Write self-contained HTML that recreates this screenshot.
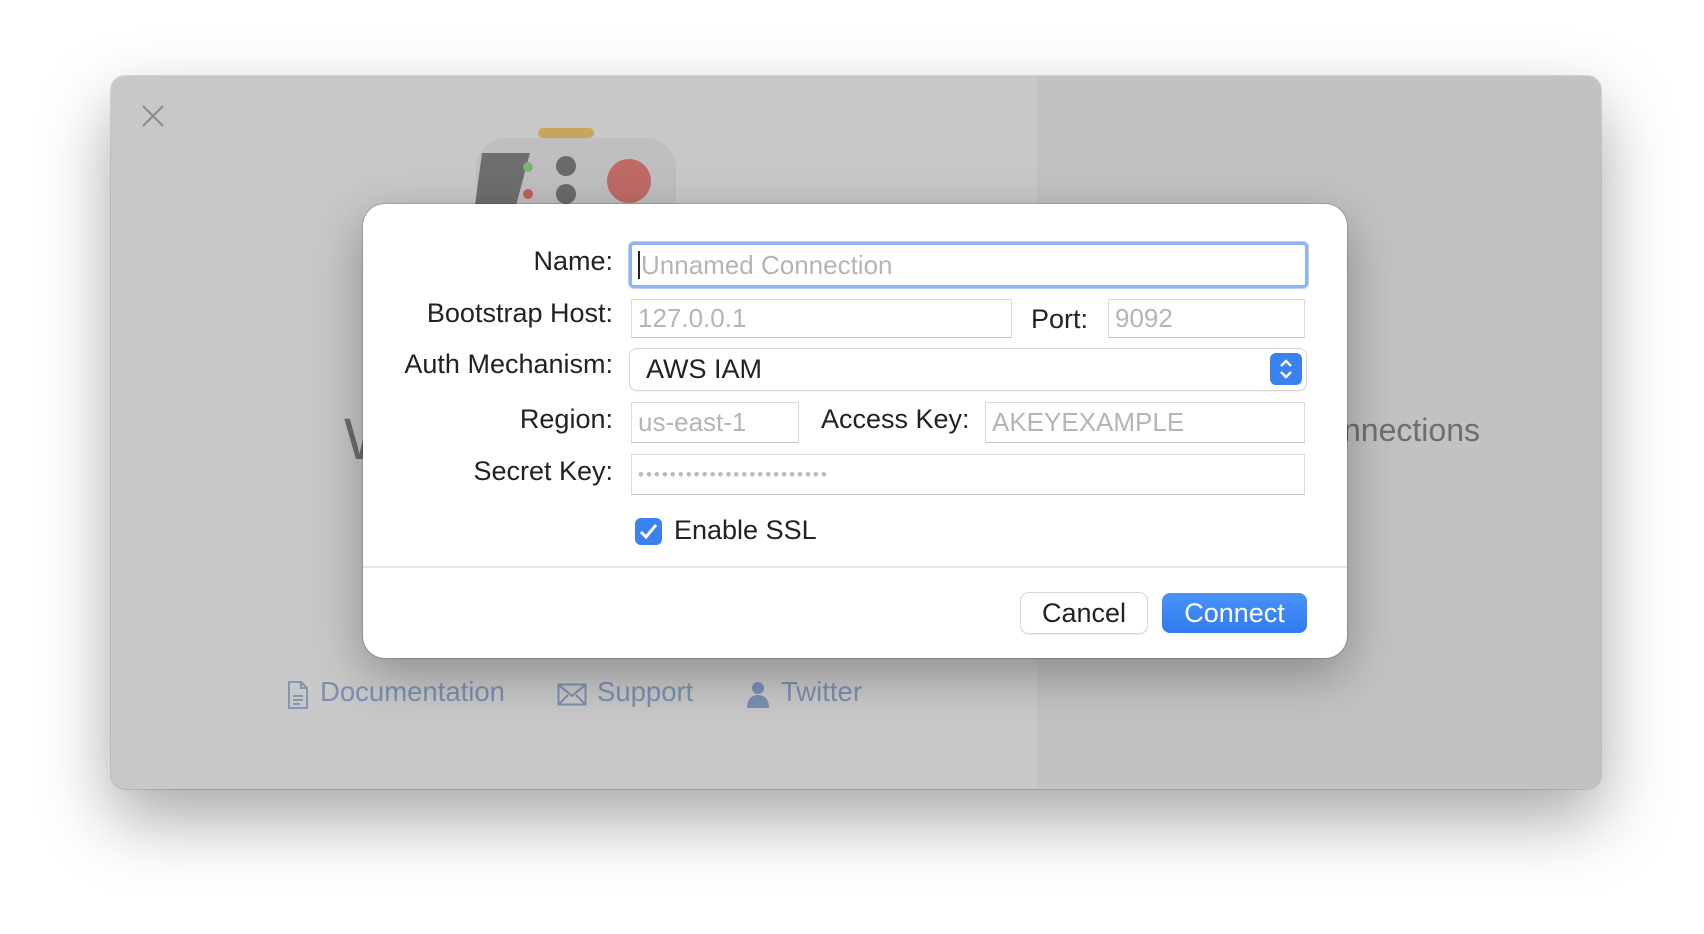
<!DOCTYPE html>
<html><head><style>
*{box-sizing:border-box;margin:0;padding:0}
body{width:1704px;height:934px;background:#fff;position:relative;overflow:hidden;font-family:"Liberation Sans",sans-serif}
.win{position:absolute;left:111px;top:76px;width:1490px;height:713px;border-radius:14px;background:#c8c8c8;box-shadow:0 30px 70px rgba(0,0,0,.35),0 0 0 1px rgba(0,0,0,.12);overflow:hidden}
.right{position:absolute;left:926px;top:0;right:0;bottom:0;background:#c2c2c2}
.abs{position:absolute}
.dlg{position:absolute;left:363px;top:204px;width:984px;height:454px;background:#fff;border-radius:22px;box-shadow:0 16px 50px rgba(0,0,0,.3),0 0 0 1px rgba(0,0,0,.15)}
.lbl{position:absolute;font-size:27px;color:#222;text-align:right;white-space:nowrap}
.fld{position:absolute;background:#fff;border:1px solid #dadada;border-bottom-color:#c4c4c4;font-size:26px;color:#b5b5b5;padding-left:6px;display:flex;align-items:center;white-space:nowrap}
.btn{position:absolute;border-radius:8px;font-size:27px;display:flex;align-items:center;justify-content:center}
.link{position:absolute;top:676px;font-size:27.5px;color:#7a90b3}
</style></head><body>
<div class="win">
 <div class="right"></div>
 <svg class="abs" style="left:30px;top:28px" width="24" height="24"><path d="M2 2L22 22M22 2L2 22" stroke="#8a8a8a" stroke-width="2"/></svg>
 <svg class="abs" style="left:355px;top:50px" width="220" height="90">
  <rect x="72" y="2" width="56" height="10" rx="5" fill="#c9a45e"/>
  <rect x="10" y="12" width="200" height="90" rx="30" fill="#bfbfc2"/>
  <path d="M16 27h48l-16 60H8z" fill="#6e6e70"/>
  <circle cx="62" cy="41" r="5" fill="#7fb07a"/><circle cx="62" cy="68" r="5" fill="#c0605a"/>
  <circle cx="100" cy="40" r="10" fill="#6a6a6a"/><circle cx="100" cy="68" r="10" fill="#6a6a6a"/>
  <circle cx="163" cy="55" r="22" fill="#c06a66"/>
 </svg>
 <div class="abs" style="left:233px;top:330px;font-size:58px;color:#6e6e6e">W</div>
 <div class="abs" style="left:1232px;top:336px;font-size:32px;color:#6e6e6e">nnections</div>
</div>
<svg class="abs" style="left:286px;top:680px" width="24" height="30"><path d="M3 2h12l6 6v20H3z M15 2v6h6 M7 16h10M7 20h10M7 24h7" fill="none" stroke="#7a90b3" stroke-width="1.8"/></svg>
<div class="link" style="left:320px">Documentation</div>
<svg class="abs" style="left:557px;top:683px" width="30" height="24"><rect x="1.5" y="1.5" width="27" height="20" fill="none" stroke="#7a90b3" stroke-width="2"/><path d="M2 2l13 11L28 2M2 21l9-9M28 21l-9-9" fill="none" stroke="#7a90b3" stroke-width="2"/></svg>
<div class="link" style="left:597px">Support</div>
<svg class="abs" style="left:746px;top:681px" width="24" height="28"><circle cx="12" cy="7" r="6" fill="#7a90b3"/><path d="M1 27c0-9 5-13 11-13s11 4 11 13z" fill="#7a90b3"/></svg>
<div class="link" style="left:781px">Twitter</div>

<div class="dlg">
 <div class="lbl" style="right:734px;top:42px">Name:</div>
 <div class="fld" style="left:266px;top:38px;width:679px;height:46px;border:3px solid #8fb3f5;border-radius:5px;box-shadow:0 0 0 1px #b9cff7"><span style="display:inline-block;width:2px;height:28px;background:#222;margin-right:1px"></span>Unnamed Connection</div>
 <div class="lbl" style="right:734px;top:94px">Bootstrap Host:</div>
 <div class="fld" style="left:268px;top:95px;width:381px;height:39px">127.0.0.1</div>
 <div class="lbl" style="left:668px;top:100px">Port:</div>
 <div class="fld" style="left:745px;top:95px;width:197px;height:39px">9092</div>
 <div class="lbl" style="right:734px;top:145px">Auth Mechanism:</div>
 <div class="abs" style="left:267px;top:145px;width:676px;height:41px;border-radius:7px;box-shadow:0 0 0 1px #d5d5d5,0 1px 2px rgba(0,0,0,.15);font-size:27px;color:#222;padding:5px 0 0 16px">AWS IAM
  <div class="abs" style="right:4px;top:4px;width:32px;height:32px;border-radius:6px;background:#3b82f1"><svg width="32" height="32"><path d="M11 13l5-5 5 5M11 19l5 5 5-5" fill="none" stroke="#fff" stroke-width="2.4"/></svg></div></div>
 <div class="lbl" style="right:734px;top:200px">Region:</div>
 <div class="fld" style="left:268px;top:198px;width:168px;height:41px">us-east-1</div>
 <div class="lbl" style="left:458px;top:200px">Access Key:</div>
 <div class="fld" style="left:622px;top:198px;width:320px;height:41px">AKEYEXAMPLE</div>
 <div class="lbl" style="right:734px;top:252px">Secret Key:</div>
 <div class="fld" style="left:268px;top:250px;width:674px;height:41px;font-size:17px;letter-spacing:2px;color:#bbb">••••••••••••••••••••••••</div>
 <div class="abs" style="left:272px;top:314px;width:27px;height:27px;border-radius:6px;background:#3b82f1"><svg width="27" height="27"><path d="M6 14l5 5 10-12" fill="none" stroke="#fff" stroke-width="3"/></svg></div>
 <div class="lbl" style="left:311px;top:311px;font-size:27px">Enable SSL</div>
 <div class="abs" style="left:0;right:0;top:362px;height:2px;background:#e6e6e6"></div>
 <div class="btn" style="left:658px;top:389px;width:126px;height:40px;background:#fff;box-shadow:0 0 0 1px #d8d8d8,0 1px 2px rgba(0,0,0,.2);color:#222">Cancel</div>
 <div class="btn" style="left:799px;top:389px;width:145px;height:40px;background:linear-gradient(#4a93f7,#2f7bf0);color:#fff">Connect</div>
</div>
</body></html>
